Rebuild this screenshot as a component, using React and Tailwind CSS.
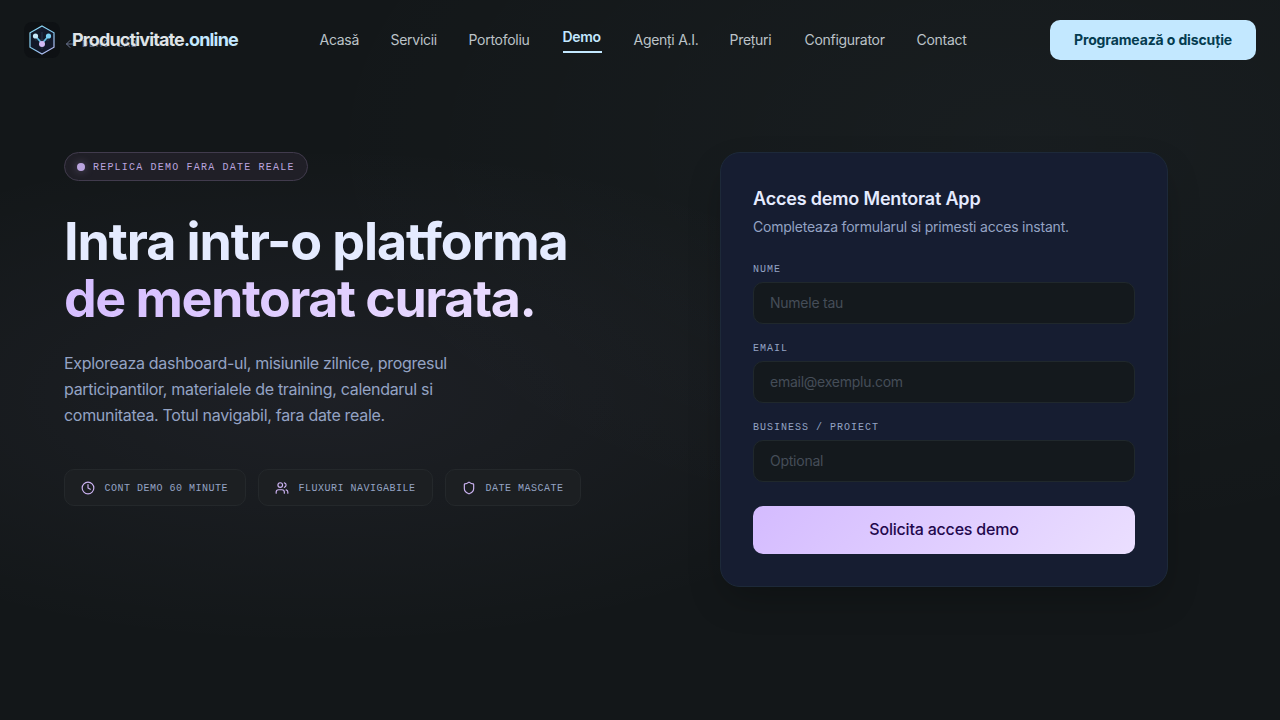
import React, { useState } from "react";
import { ArrowLeft, Clock, Shield, Users } from "lucide-react";

const navLinks = [
  { label: "Acasă", width: "w-[39px]" },
  { label: "Servicii", width: "w-[46px]" },
  { label: "Portofoliu", width: "w-[62px]" },
  { label: "Demo", width: "w-[39px]", active: true },
  { label: "Agenți A.I.", width: "w-[64px]" },
  { label: "Prețuri", width: "w-[43px]" },
  { label: "Configurator", width: "w-[80px]" },
  { label: "Contact", width: "w-[51px]" }
];

const features = [
  { label: "Cont demo 60 minute", icon: Clock, width: "w-[182px]" },
  { label: "Fluxuri navigabile", icon: Users, width: "w-[175px]" },
  { label: "Date mascate", icon: Shield, width: "w-[136px]" }
];

const fields = [
  { name: "name", label: "Nume", placeholder: "Numele tau", type: "text" },
  { name: "email", label: "Email", placeholder: "email@exemplu.com", type: "email" },
  { name: "business", label: "Business / Proiect", placeholder: "Optional", type: "text" }
];

const Logo = () => (
  <svg width="36" height="36" viewBox="0 0 36 36" fill="none" className="shrink-0">
    <defs>
      <linearGradient id="hex" x1="6" y1="3" x2="30" y2="33" gradientUnits="userSpaceOnUse">
        <stop stopColor="#8fdcf8" />
        <stop offset="0.5" stopColor="#82c9ee" />
        <stop offset="1" stopColor="#c5b2ee" />
      </linearGradient>
    </defs>
    <rect width="36" height="36" rx="8" fill="#0e1114" />
    <path d="M18 4L30 10.8V25.2L18 32L6 25.2V10.8Z" fill="#12182a" stroke="url(#hex)" strokeWidth="1.2" />
    <path d="M18 10V27M11 18H25" stroke="#26354a" strokeWidth="1" />
    <path d="M11.5 14L18 21.5L24.5 14" stroke="#63bce3" strokeWidth="1.6" />
    <circle cx="11.5" cy="14" r="2.6" fill="#c5e7fa" />
    <circle cx="24.5" cy="14" r="2.6" fill="#7acff5" />
    <circle cx="18" cy="22" r="3" fill="#d1b9f4" />
  </svg>
);

const Header = () => (
  <header className="relative z-10 flex h-20 items-center justify-between px-6">
    <a href="#" className="flex items-center gap-3">
      <Logo />
      <span className="w-[165px] whitespace-nowrap pb-0.5 text-[18px] font-bold tracking-[-0.87px] text-[#dfe3e6]">
        Productivitate<span className="text-[#c3e8ff]">.online</span>
      </span>
    </a>

    <nav className="flex items-center gap-8 text-sm text-[#bcc3c8]">
      {navLinks.map((link) => (
        <a
          key={link.label}
          href="#"
          className={`whitespace-nowrap ${link.width} ${
            link.active
              ? "border-b-2 border-[#c3e8ff] pb-1 font-semibold tracking-[-0.3px] text-[#c3e8ff]"
              : "tracking-[-0.28px]"
          }`}
        >
          {link.label}
        </a>
      ))}
    </nav>

    <button className="h-10 w-[206px] whitespace-nowrap rounded-[10px] bg-[#c3e8ff] text-sm font-bold tracking-[-0.13px] text-[#053c50]">
      Programează o discuție
    </button>
  </header>
);

const Hero = () => (
  <section className="w-[560px]">
    <div className="flex h-[29px] w-[244px] items-center gap-2 rounded-full border border-[#413b4d] bg-[#201f27] pl-3">
      <span className="size-2 rounded-full bg-[#baa4df] shadow-[0_0_8px_#baa4df66]" />
      <span className="whitespace-nowrap pt-0.5 font-['Liberation_Mono',monospace] text-[10px] uppercase tracking-[1.2px] text-[#baa4df]">
        Replica demo fara date reale
      </span>
    </div>

    <h1 className="mt-8 whitespace-nowrap text-[52px] font-bold leading-[57.2px] tracking-[-1.08px] text-[#e5ebff]">
      Intra intr-o platforma
      <br />
      <span className="inline-block bg-[linear-gradient(135deg,#d4bbff,#ebdfff)] bg-clip-text tracking-[-1.5px] text-transparent">
        de mentorat curata.
      </span>
    </h1>

    <p className="mt-[23px] w-[440px] text-base leading-[26px] tracking-[-0.3px] text-[#94a3c4]">
      Exploreaza dashboard-ul, misiunile zilnice, progresul
      <br />
      participantilor, materialele de training, calendarul si
      <br />
      comunitatea. Totul navigabil, fara date reale.
    </p>

    <div className="mt-[41px] flex gap-3">
      {features.map(({ label, icon: Icon, width }) => (
        <div
          key={label}
          className={`flex h-[37px] items-center gap-[9.5px] rounded-[10px] border border-[#24282b] bg-[#1c1f22] pl-4 ${width}`}
        >
          <Icon size={14} className="text-[#cbb2f1]" />
          <span className="whitespace-nowrap pt-0.5 font-['Liberation_Mono',monospace] text-[10px] uppercase tracking-[0.5px] text-[#94a3c4]">
            {label}
          </span>
        </div>
      ))}
    </div>
  </section>
);

const DemoForm = () => {
  const [formData, setFormData] = useState({ name: "", email: "", business: "" });

  const handleChange = (e) => {
    setFormData((prev) => ({
      ...prev,
      [e.target.name]: e.target.value
    }));
  };

  return (
    <form
      onSubmit={(e) => e.preventDefault()}
      className="h-[435px] w-[448px] rounded-[20px] border border-[#1d2939] bg-[#161d31] p-8 shadow-[0_16px_36px_-6px_#00000040]"
    >
      <h2 className="text-lg font-semibold leading-[27px] tracking-[-0.18px] text-[#e5ebff]">
        Acces demo Mentorat App
      </h2>
      <p className="mt-1 text-sm leading-[21px] tracking-[-0.21px] text-[#94a3c4]">
        Completeaza formularul si primesti acces instant.
      </p>

      <div className="mt-[25px] space-y-[17px]">
        {fields.map((field) => (
          <label key={field.name} className="block">
            <span className="mb-[5px] block font-['Liberation_Mono',monospace] text-[10px] uppercase leading-[15px] tracking-[1px] text-[#94a3c4]">
              {field.label}
            </span>
            <input
              name={field.name}
              type={field.type}
              value={formData[field.name]}
              placeholder={field.placeholder}
              onChange={handleChange}
              className="block h-[42px] w-full rounded-[10px] border border-[#20282c] bg-[#14191d] px-4 pb-0.5 text-sm tracking-[-0.25px] text-[#e5ebff] outline-none placeholder:text-[#454d58]"
            />
          </label>
        ))}
      </div>

      <button className="mt-6 h-12 w-full rounded-[10px] bg-[linear-gradient(135deg,#d4bbff,#ebdfff)] pb-0.5 text-base font-medium tracking-[-0.2px] text-[#23084d]">
        Solicita acces demo
      </button>
    </form>
  );
};

export default function App() {
  return (
    <div className="relative h-screen overflow-hidden bg-[#131719] bg-[radial-gradient(ellipse_at_25%_55%,#d4bbff0e,transparent_45%),radial-gradient(ellipse_at_80%_20%,#c3e8ff08,transparent_50%)] font-[Inter,sans-serif]">
      {/* back link, sits under the header */}
      <a
        href="#"
        className="absolute left-16 top-[35px] flex items-center gap-1.5 font-['Liberation_Mono',monospace] text-[10px] tracking-[1px] text-[#69738f]"
      >
        <ArrowLeft size={12} />
        <span className="pt-0.5">DEMO LAB</span>
      </a>

      <Header />

      <main className="flex gap-24 px-16 pt-[72px]">
        <Hero />
        <DemoForm />
      </main>
    </div>
  );
}
